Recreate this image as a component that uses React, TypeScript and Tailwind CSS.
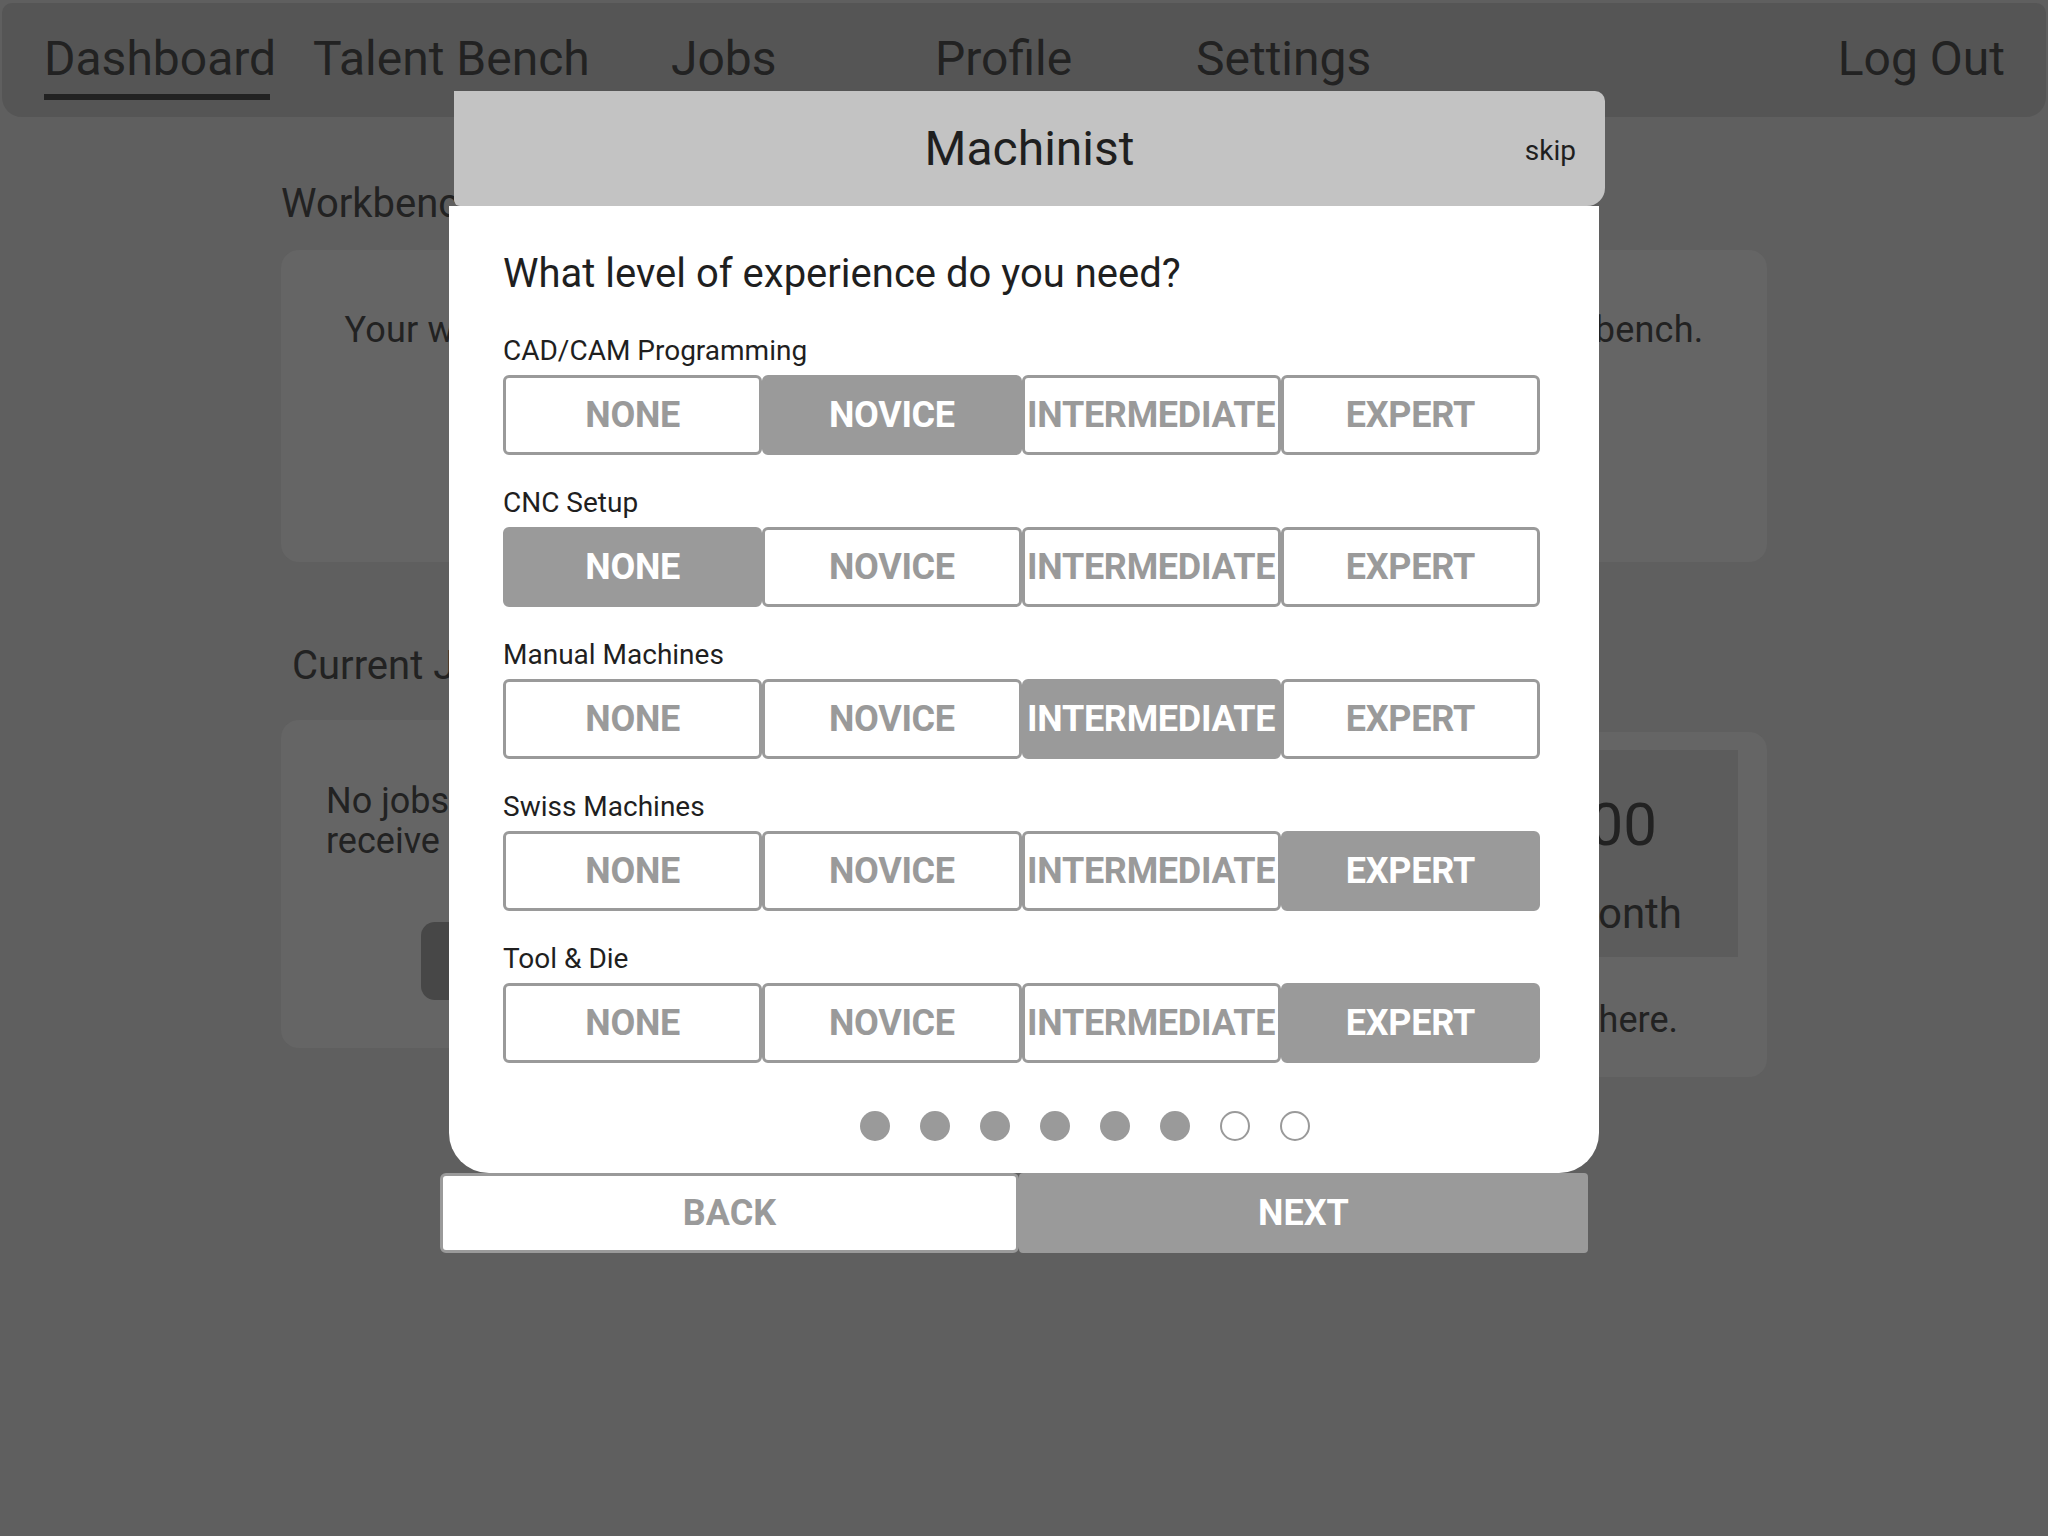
import React from 'react';
import clsx from 'clsx';

const levels = ['NONE', 'NOVICE', 'INTERMEDIATE', 'EXPERT'];

const skills = [
  { name: 'CAD/CAM Programming', value: 1 },
  { name: 'CNC Setup', value: 0 },
  { name: 'Manual Machines', value: 2 },
  { name: 'Swiss Machines', value: 3 },
  { name: 'Tool & Die', value: 3 },
];

const navItems = [
  { label: 'Dashboard', width: 'w-[269px]', active: true },
  { label: 'Talent Bench', width: 'w-[358px]' },
  { label: 'Jobs', width: 'w-[264px]' },
  { label: 'Profile', width: 'w-[261px]' },
  { label: 'Settings', width: 'w-[300px]' },
];

interface ILevelPicker {
  label: string
  value: number
}

function LevelPicker({ label, value }: ILevelPicker) {
  return (
    <div>
      <div className="mb-[8px] h-[32px] text-[28px] leading-[32px] text-[#1f1f1f]">{label}</div>
      <div className="grid h-[80px] grid-cols-4">
        {levels.map((level, i) => (
          <div
            key={level}
            className={clsx(
              'flex items-center justify-center overflow-visible whitespace-nowrap rounded-[6px] border-[3px] border-[#9a9a9a] text-[36px] font-bold tracking-[-0.3px]',
              i === value ? 'bg-[#9a9a9a] text-white' : 'bg-white text-[#9a9a9a]',
            )}
          >
            {level}
          </div>
        ))}
      </div>
    </div>
  );
}

function Dots({ total, filled }: { total: number, filled: number }) {
  return (
    <div className="ml-[357px] mt-[48px] flex gap-[30px]">
      {Array.from({ length: total }).map((_, i) => (
        <span
          // eslint-disable-next-line react/no-array-index-key
          key={i}
          className={clsx(
            'h-[30px] w-[30px] rounded-full',
            i < filled ? 'bg-[#9a9a9a]' : 'border-2 border-[#9a9a9a] bg-white',
          )}
        />
      ))}
    </div>
  );
}

function ExperienceModal() {
  return (
    <div className="absolute left-[440px] top-[91px] w-[1165px]">
      <div className="relative ml-[14px] flex h-[115px] items-center justify-center rounded-tr-[10px] rounded-br-[18px] rounded-bl-[6px] bg-[#c3c3c3]">
        <h3 className="text-[48px] leading-[56px] text-[#1f1f1f]">Machinist</h3>
        <span className="absolute right-[29px] top-[43px] text-[28px] leading-[34px] text-[#1f1f1f]">skip</span>
      </div>

      <div className="ml-[9px] mr-[6px] h-[967px] rounded-b-[40px] bg-white pl-[54px] pr-[59px] pt-[44px]">
        <p className="text-[40px] leading-[48px] text-[#1f1f1f]">What level of experience do you need?</p>
        <div className="mt-[37px] flex flex-col gap-[32px]">
          {skills.map((skill) => (
            <LevelPicker key={skill.name} label={skill.name} value={skill.value} />
          ))}
        </div>
        <Dots total={8} filled={6} />
      </div>

      <div className="flex h-[80px]">
        <button
          type="button"
          className="w-[579px] rounded-[6px] border-[3px] border-[#9a9a9a] bg-white text-[36px] font-bold text-[#9a9a9a]"
        >
          BACK
        </button>
        <button
          type="button"
          className="w-[569px] rounded-[4px] bg-[#9a9a9a] text-[36px] font-bold text-white"
        >
          NEXT
        </button>
      </div>
    </div>
  );
}

function App() {
  return (
    <div className="relative h-[1536px] w-[2048px] overflow-hidden bg-[#5f5f5f] font-['Roboto',sans-serif] text-[#222]">
      <nav className="mx-[2px] mt-[3px] flex h-[114px] items-start rounded-t-[10px] rounded-b-[20px] bg-[#555555] pl-[42px] pr-[41px] pt-[28px] text-[48px] leading-[56px]">
        {navItems.map((item) => (
          <div key={item.label} className={clsx('flex flex-col', item.width)}>
            <span>{item.label}</span>
            {item.active && <span className="mt-[7px] h-[6px] w-[226px] bg-[#222]" />}
          </div>
        ))}
        <span className="ml-auto">Log Out</span>
      </nav>

      <main className="px-[281px]">
        <h2 className="mt-[63px] text-[40px] leading-[48px]">Workbench</h2>
        <div className="mt-[22px] h-[312px] rounded-[18px] bg-[#656565] pt-[58px] text-center text-[36px] leading-[44px] tracking-[0.2px]">
          Your workbench is empty. Add machinists from the Talent Bench to your workbench.
        </div>

        <h2 className="ml-[11px] mt-[80px] text-[40px] leading-[48px]">Current Jobs</h2>
        <div className="mt-[30px] flex items-start justify-between">
          <div className="h-[328px] w-[720px] rounded-[18px] bg-[#656565] pl-[45px] pt-[61px] text-[36px] leading-[40px]">
            <p>
              No jobs posted yet. Post a job to
              <br />
              receive matches from the Talent Bench.
            </p>
            <div className="ml-[95px] mt-[61px] h-[78px] w-[400px] rounded-[14px] bg-[#474747]" />
          </div>
          <div className="mt-[12px] h-[345px] w-[640px] rounded-[18px] bg-[#656565] pr-[29px] pt-[18px]">
            <div className="flex h-[207px] flex-col items-end bg-[#5c5c5c] pt-[40px]">
              <span className="mr-[81px] text-[60px] leading-[70px]">$0.00</span>
              <span className="mr-[56px] mt-[29px] text-[42px] leading-[50px]">This Month</span>
            </div>
            <p className="mr-[60px] mt-[41px] text-right text-[36px] leading-[44px]">Earnings appear here.</p>
          </div>
        </div>
      </main>

      <ExperienceModal />
    </div>
  );
}

export default App;
